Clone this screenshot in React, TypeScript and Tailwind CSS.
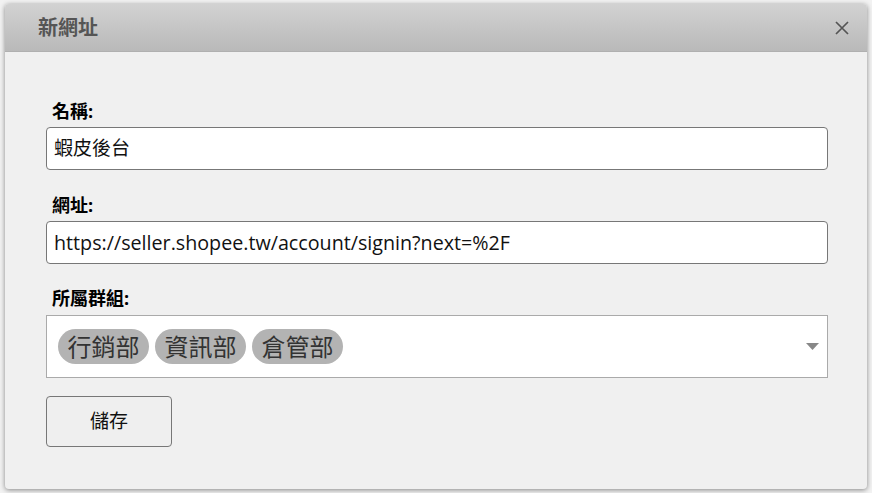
const groups = ['行銷部', '資訊部', '倉管部']

const font = "font-['Open_Sans','Noto_Sans_CJK_TC',sans-serif]"

export default function App() {
  return (
    <div className={`w-[872px] h-[493px] bg-[#f2f2f2] pt-[4px] px-[5px] ${font}`}>
      <div className="h-[485px] rounded-[4px] bg-[#f0f0f0] shadow-[0_1px_5px_rgba(0,0,0,0.45)] overflow-hidden flex flex-col">
        {/* Header */}
        <div className="h-[48px] shrink-0 flex items-center justify-between pl-[33px] pr-[17px] bg-gradient-to-b from-[#d2d2d2] to-[#b9b9b9] border-b border-[#b0b0b0]">
          <span className="text-[20px] font-bold text-[#555] leading-none">新網址</span>
          <svg width="16" height="16" viewBox="0 0 16 16" className="text-[#555]">
            <path d="M2 2 L14 14 M14 2 L2 14" stroke="currentColor" strokeWidth="1.7" />
          </svg>
        </div>

        {/* Body */}
        <div className="pl-[41px] pr-[39px] pt-[49px] flex flex-col">
          <label className="text-[18px] font-bold text-black leading-[20px] ml-[6px] mb-[6px]">名稱:</label>
          <div className="h-[43px] bg-white border border-[#777] rounded-[4px] flex items-center px-[7px] text-[19px] text-[#111]">
            蝦皮後台
          </div>

          <label className="text-[18px] font-bold text-black leading-[20px] ml-[6px] mt-[25px] mb-[6px]">網址:</label>
          <div className="h-[43px] bg-white border border-[#777] rounded-[4px] flex items-center px-[7px] text-[19.7px] text-[#111]">
            https://seller.shopee.tw/account/signin?next=%2F
          </div>

          <label className="text-[18px] font-bold text-black leading-[20px] ml-[6px] mt-[24px] mb-[7px]">所屬群組:</label>
          <div className="h-[63px] bg-white border border-[#aaa] flex items-center pl-[11px] pr-[8px]">
            <div className="flex gap-[6px] flex-1">
              {groups.map((g) => (
                <span key={g} className="h-[35px] px-[9.5px] rounded-full bg-[#b3b3b3] text-[24px] leading-none text-[#333] flex items-center">
                  {g}
                </span>
              ))}
            </div>
            <svg width="13" height="7" viewBox="0 0 13 7">
              <path d="M0 0 L13 0 L6.5 7 Z" fill="#888" />
            </svg>
          </div>

          <button className="mt-[18px] w-[126px] h-[51px] bg-[#efefef] border border-[#777] rounded-[4px] text-[19px] text-[#111]">
            儲存
          </button>
        </div>
      </div>
    </div>
  )
}
